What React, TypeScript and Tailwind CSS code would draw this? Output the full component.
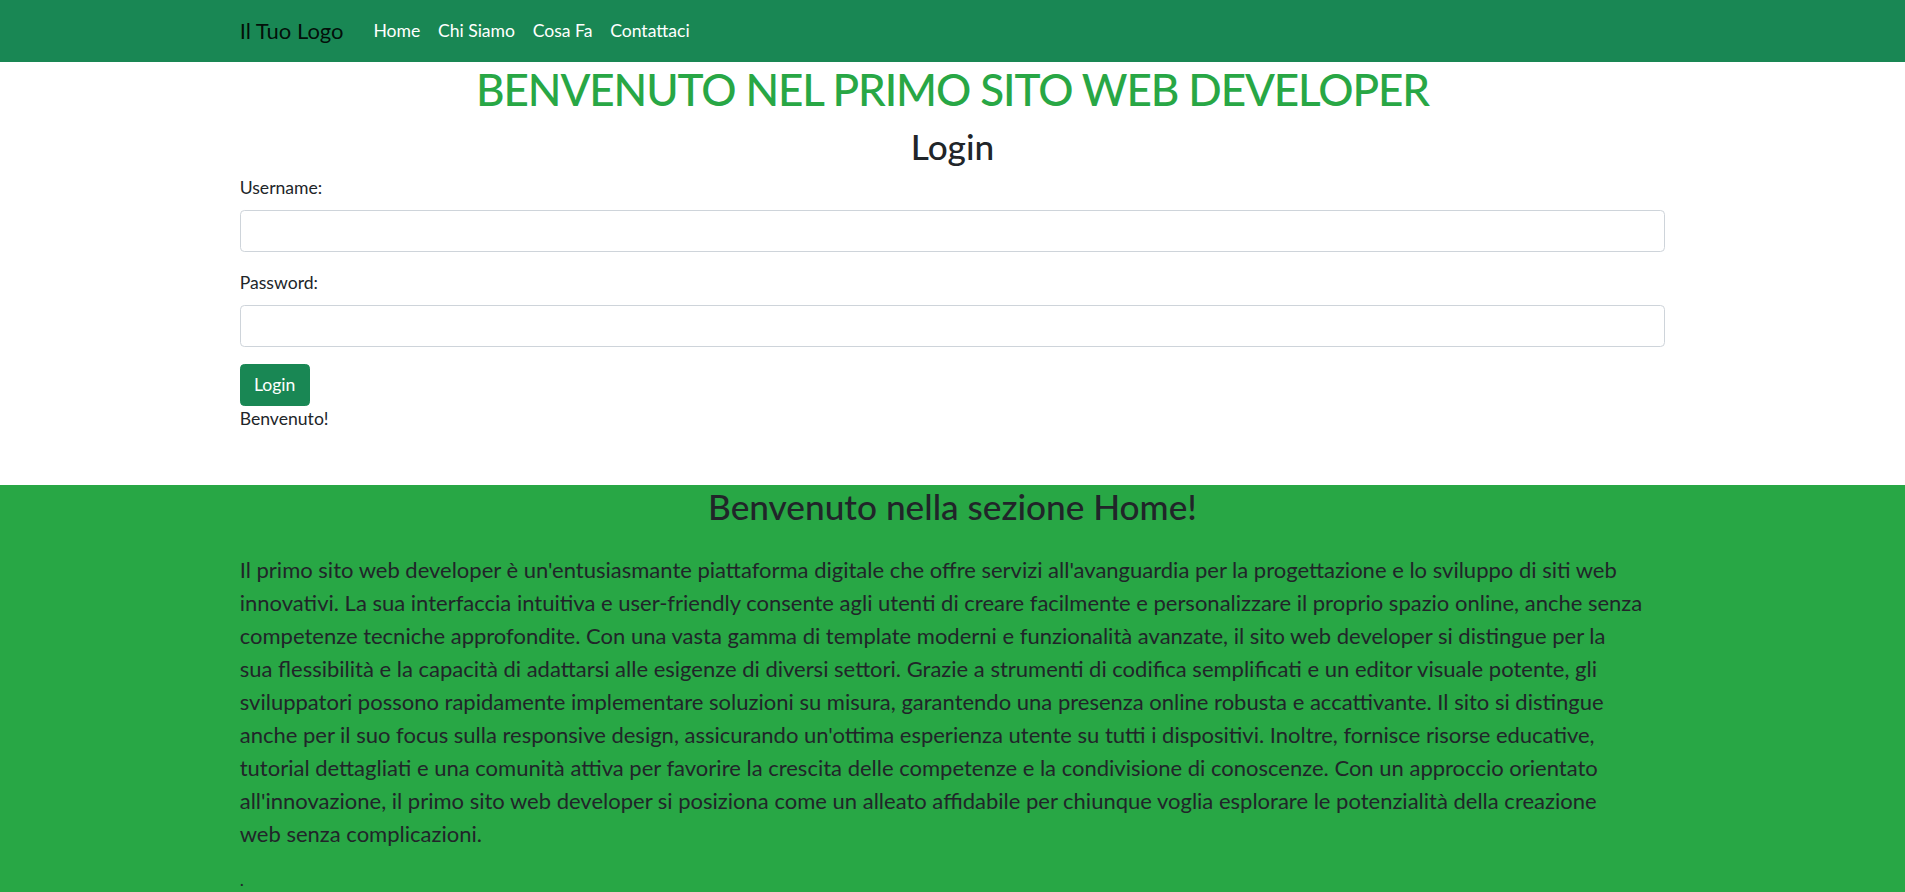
import React from "react";

const font = { fontFamily: 'Lato, "Open Sans", sans-serif' };

export default function App() {
  return (
    <div className="h-screen overflow-hidden bg-white text-[#212529] flex flex-col" style={font}>
      <nav className="h-[61.6px] shrink-0 bg-[#198754] flex items-center">
        <div className="w-[1425.6px] mx-auto flex items-center">
          <a className="text-[22px] leading-[33px] text-black/90 mr-[21px]">Il Tuo Logo</a>
          <ul className="flex items-center">
            <li><a className="block px-[8.8px] text-[17.6px] leading-[26.4px] text-white">Home</a></li>
            <li><a className="block px-[8.8px] text-[17.6px] leading-[26.4px] text-white">Chi Siamo</a></li>
            <li><a className="block px-[8.8px] text-[17.6px] leading-[26.4px] text-white">Cosa Fa</a></li>
            <li><a className="block px-[8.8px] text-[17.6px] leading-[26.4px] text-white">Contattaci</a></li>
          </ul>
        </div>
      </nav>

      <div className="w-[1425.6px] mx-auto shrink-0 pb-[52.8px]">
        <h1 className="mt-[1.5px] mb-[8.8px] text-center text-[44px] leading-[52.8px] font-medium tracking-[-1.1px] text-[#28a745]">
          BENVENUTO NEL PRIMO SITO WEB DEVELOPER
        </h1>
        <h2 className="mb-[8px] text-center text-[35.2px] leading-[42.24px] font-medium">Login</h2>
        <form className="text-[17.6px] leading-[26.4px]">
          <div className="mb-[17.6px]">
            <label className="block mb-[8.8px]">Username:</label>
            <input type="text" className="block w-full h-[41.8px] rounded-[4.4px] border border-[#ced4da] bg-white px-[13.2px] outline-none" />
          </div>
          <div className="mb-[17.6px]">
            <label className="block mb-[8.8px]">Password:</label>
            <input type="password" className="block w-full h-[41.8px] rounded-[4.4px] border border-[#ced4da] bg-white px-[13.2px] outline-none" />
          </div>
          <button type="button" className="h-[41.6px] px-[13.2px] rounded-[4.4px] bg-[#198754] text-white text-[17.6px] leading-[26.4px] border border-[#198754]">
            Login
          </button>
          <p>Benvenuto!</p>
        </form>
      </div>

      <section className="flex-1 bg-[#28a745]">
        <div className="w-[1425.6px] mx-auto">
          <h2 className="mb-[25.5px] text-center text-[35.2px] leading-[42.24px] font-medium">Benvenuto nella sezione Home!</h2>
          <p className="text-[22px] leading-[33px] mb-[17.6px]">
            Il primo sito web developer è un'entusiasmante piattaforma digitale che offre servizi all'avanguardia per la progettazione e lo sviluppo di siti web<br />
            innovativi. La sua interfaccia intuitiva e user-friendly consente agli utenti di creare facilmente e personalizzare il proprio spazio online, anche senza<br />
            competenze tecniche approfondite. Con una vasta gamma di template moderni e funzionalità avanzate, il sito web developer si distingue per la<br />
            sua flessibilità e la capacità di adattarsi alle esigenze di diversi settori. Grazie a strumenti di codifica semplificati e un editor visuale potente, gli<br />
            sviluppatori possono rapidamente implementare soluzioni su misura, garantendo una presenza online robusta e accattivante. Il sito si distingue<br />
            anche per il suo focus sulla responsive design, assicurando un'ottima esperienza utente su tutti i dispositivi. Inoltre, fornisce risorse educative,<br />
            tutorial dettagliati e una comunità attiva per favorire la crescita delle competenze e la condivisione di conoscenze. Con un approccio orientato<br />
            all'innovazione, il primo sito web developer si posiziona come un alleato affidabile per chiunque voglia esplorare le potenzialità della creazione<br />
            web senza complicazioni.
          </p>
          <p className="text-[17.6px] leading-[26.4px]">.</p>
        </div>
      </section>
    </div>
  );
}
